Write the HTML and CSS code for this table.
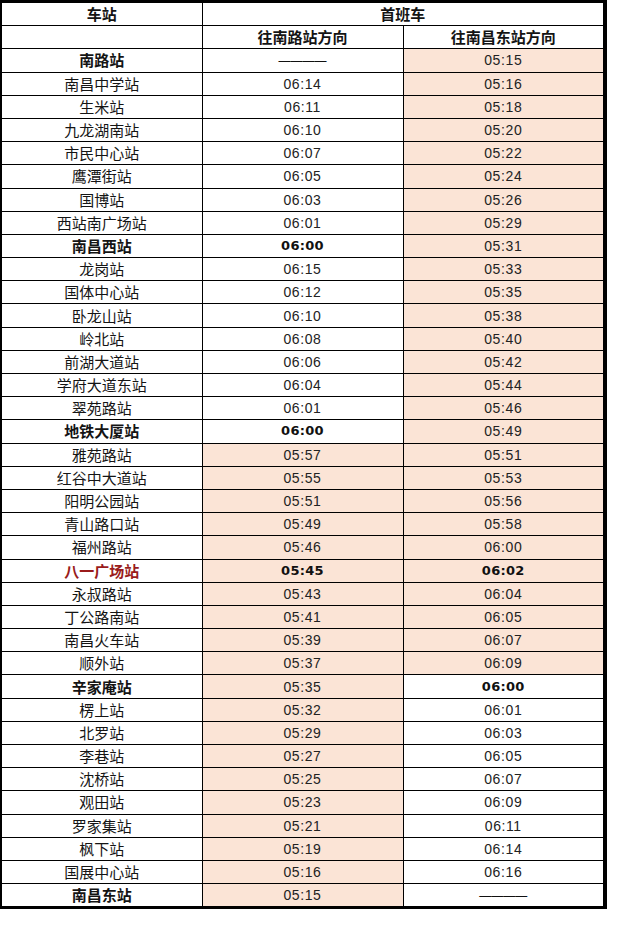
FILE: index.html
```html
<!DOCTYPE html>
<html lang="zh-CN">
<head>
<meta charset="utf-8">
<title>首班车时刻表</title>
<link rel="stylesheet" href="styles.css">
</head>
<body>
<table class="timetable">
  <colgroup><col class="c1"><col class="c2"><col class="c3"></colgroup>
  <tr class="hd"><td>车站</td><td colspan="2">首班车</td></tr>
  <tr class="hd"><td></td><td>往南路站方向</td><td>往南昌东站方向</td></tr>
  <tr><td class="b">南路站</td><td class="t"><span class="dash">————</span></td><td class="t s">05:15</td></tr>
  <tr><td>南昌中学站</td><td class="t">06:14</td><td class="t s">05:16</td></tr>
  <tr><td>生米站</td><td class="t">06:11</td><td class="t s">05:18</td></tr>
  <tr><td>九龙湖南站</td><td class="t">06:10</td><td class="t s">05:20</td></tr>
  <tr><td>市民中心站</td><td class="t">06:07</td><td class="t s">05:22</td></tr>
  <tr><td>鹰潭街站</td><td class="t">06:05</td><td class="t s">05:24</td></tr>
  <tr><td>国博站</td><td class="t">06:03</td><td class="t s">05:26</td></tr>
  <tr><td>西站南广场站</td><td class="t">06:01</td><td class="t s">05:29</td></tr>
  <tr><td class="b">南昌西站</td><td class="t b">06:00</td><td class="t s">05:31</td></tr>
  <tr><td>龙岗站</td><td class="t">06:15</td><td class="t s">05:33</td></tr>
  <tr><td>国体中心站</td><td class="t">06:12</td><td class="t s">05:35</td></tr>
  <tr><td>卧龙山站</td><td class="t">06:10</td><td class="t s">05:38</td></tr>
  <tr><td>岭北站</td><td class="t">06:08</td><td class="t s">05:40</td></tr>
  <tr><td>前湖大道站</td><td class="t">06:06</td><td class="t s">05:42</td></tr>
  <tr><td>学府大道东站</td><td class="t">06:04</td><td class="t s">05:44</td></tr>
  <tr><td>翠苑路站</td><td class="t">06:01</td><td class="t s">05:46</td></tr>
  <tr><td class="b">地铁大厦站</td><td class="t b">06:00</td><td class="t s">05:49</td></tr>
  <tr><td>雅苑路站</td><td class="t s">05:57</td><td class="t s">05:51</td></tr>
  <tr><td>红谷中大道站</td><td class="t s">05:55</td><td class="t s">05:53</td></tr>
  <tr><td>阳明公园站</td><td class="t s">05:51</td><td class="t s">05:56</td></tr>
  <tr><td>青山路口站</td><td class="t s">05:49</td><td class="t s">05:58</td></tr>
  <tr><td>福州路站</td><td class="t s">05:46</td><td class="t s">06:00</td></tr>
  <tr class="red"><td class="b">八一广场站</td><td class="t s b">05:45</td><td class="t s b">06:02</td></tr>
  <tr><td>永叔路站</td><td class="t s">05:43</td><td class="t s">06:04</td></tr>
  <tr><td>丁公路南站</td><td class="t s">05:41</td><td class="t s">06:05</td></tr>
  <tr><td>南昌火车站</td><td class="t s">05:39</td><td class="t s">06:07</td></tr>
  <tr><td>顺外站</td><td class="t s">05:37</td><td class="t s">06:09</td></tr>
  <tr><td class="b">辛家庵站</td><td class="t s">05:35</td><td class="t b">06:00</td></tr>
  <tr><td>楞上站</td><td class="t s">05:32</td><td class="t">06:01</td></tr>
  <tr><td>北罗站</td><td class="t s">05:29</td><td class="t">06:03</td></tr>
  <tr><td>李巷站</td><td class="t s">05:27</td><td class="t">06:05</td></tr>
  <tr><td>沈桥站</td><td class="t s">05:25</td><td class="t">06:07</td></tr>
  <tr><td>观田站</td><td class="t s">05:23</td><td class="t">06:09</td></tr>
  <tr><td>罗家集站</td><td class="t s">05:21</td><td class="t">06:11</td></tr>
  <tr><td>枫下站</td><td class="t s">05:19</td><td class="t">06:14</td></tr>
  <tr><td>国展中心站</td><td class="t s">05:16</td><td class="t">06:16</td></tr>
  <tr><td class="b">南昌东站</td><td class="t s">05:15</td><td class="t"><span class="dash">————</span></td></tr>
</table>
</body>
</html>
```

FILE: styles.css
```css
html, body {
  margin: 0;
  padding: 0;
  background: #ffffff;
}

.timetable {
  border-collapse: collapse;
  table-layout: fixed;
  width: 604px;
  border-top: 3px solid #000;
  border-right: 4px solid #000;
  border-bottom: 3px solid #000;
  border-left: 2px solid #000;
  font-family: "Noto Sans CJK SC", "Liberation Sans", sans-serif;
  font-size: 15px;
  color: #141414;
}

.c1 { width: 201px; }
.c2 { width: 201px; }
.c3 { width: 202px; }

.timetable td {
  border: 1px solid #000;
  height: 22.2px;
  padding: 0;
  text-align: center;
  vertical-align: middle;
  line-height: 20px;
  white-space: nowrap;
}

.timetable .hd td {
  font-weight: 700;
}

.timetable td.t {
  font-family: "Liberation Sans", "DejaVu Sans", sans-serif;
  font-size: 14px;
  letter-spacing: 0.6px;
  color: #222;
}

.timetable td.b {
  font-weight: 700;
}

.timetable td.t.b {
  font-family: "DejaVu Sans", "Liberation Sans", sans-serif;
  font-size: 13px;
  letter-spacing: 0.3px;
  color: #111;
}

.timetable td.s {
  background: #fbe4d6;
}

.timetable .red td {
  color: #9a1b1b;
}

.dash {
  font-family: "Liberation Sans", sans-serif;
  font-size: 12px;
  letter-spacing: 0;
  color: #111;
}
```
